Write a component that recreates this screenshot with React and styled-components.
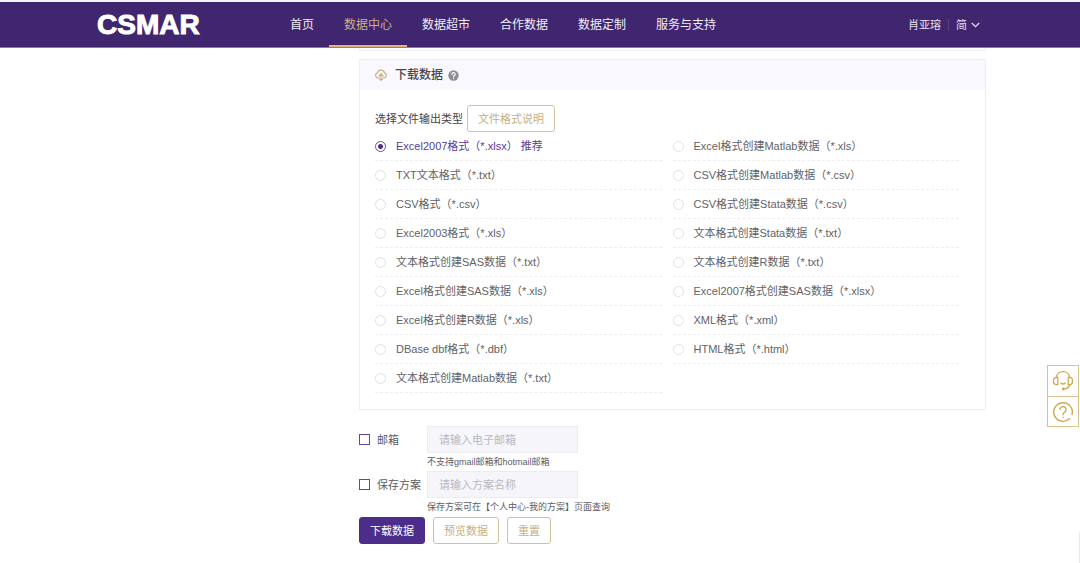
import React, { useState } from "react";
import styled, { createGlobalStyle } from "styled-components";

const GlobalStyle = createGlobalStyle`
  *, *::before, *::after { box-sizing: border-box; }
  body {
    margin: 0;
    background: #fff;
    color: #5c5c62;
    font: 11px/16px "Liberation Sans", "Noto Sans CJK SC", sans-serif;
  }
  button, input { font: inherit; margin: 0; }
`;

const Header = styled.header`
  display: flex;
  align-items: stretch;
  height: 48px;
  padding: 0 100px 0 97px;
  border-top: 2px solid #f4f3f8;
  border-bottom: 1px solid #8a78a8;
  background: #40256f;
  color: #fff;
`;

const Logo = styled.a`
  width: 178px;
  color: #fff;
  font-size: 28px;
  font-weight: 700;
  line-height: 46px;
  text-decoration: none;
  -webkit-text-stroke: 1px #fff;
`;

const Nav = styled.nav`
  display: flex;
`;

const NavLink = styled.a`
  padding: 0 15px;
  border-bottom: 2px solid ${(p) => (p.$active ? "#e6b277" : "transparent")};
  color: ${(p) => (p.$active ? "#c9b183" : "#f1eef6")};
  font-size: 12px;
  line-height: 46px;
  text-decoration: none;
  white-space: nowrap;
`;

const Account = styled.div`
  display: flex;
  align-items: center;
  margin-left: auto;
  color: #e6e0ef;
`;

const UserLink = styled.a`
  padding-right: 7px;
  border-right: 1px solid #5a4285;
  color: inherit;
  line-height: 12px;
  text-decoration: none;
`;

const LangButton = styled.button`
  display: flex;
  align-items: center;
  gap: 4px;
  padding: 0 0 0 7px;
  border: 0;
  background: none;
  color: inherit;
`;

const Main = styled.main`
  padding: 0 94px 0 359px;
`;

const PreviousPanel = styled.div`
  height: 3px;
  margin-bottom: 8px;
  border: 1px solid #efeff4;
  border-top: 0;
`;

const Panel = styled.section`
  border: 1px solid #ededf2;
`;

const PanelHeader = styled.div`
  display: flex;
  align-items: center;
  height: 30px;
  padding: 0 15px;
  background: #f8f8fe;
`;

const PanelTitle = styled.h2`
  margin: 0 5px 0 8px;
  color: #48484c;
  font-size: 12px;
  font-weight: 500;
`;

const PanelBody = styled.div`
  padding: 15px 26px 16px 15px;
`;

const TypeLine = styled.div`
  display: flex;
  align-items: center;
  gap: 4px;
  color: #444;
`;

const Button = styled.button`
  height: 27px;
  padding: 0 10px;
  border: 1px solid ${(p) => (p.$primary ? "#4d2d8a" : "#d2c39f")};
  border-radius: 3px;
  background: ${(p) => (p.$primary ? "#4d2d8a" : "#fff")};
  color: ${(p) => (p.$primary ? "#fff" : "#c4b083")};
  white-space: nowrap;
`;

const Formats = styled.div`
  display: grid;
  grid-template-columns: 1fr 1fr;
  align-items: start;
  gap: 11px;
`;

const FormatLabel = styled.label`
  display: flex;
  align-items: center;
  gap: 10px;
  height: 29px;
  border-bottom: 1px dashed #efeff1;
  color: ${(p) => (p.$checked ? "#5a3b97" : "#626267")};
  white-space: nowrap;
`;

const Radio = styled.input`
  appearance: none;
  width: 11px;
  height: 11px;
  border: 1px solid #e2e2e6;
  border-radius: 50%;
  background: #fff;
  &:checked {
    border-color: #6a4fa0;
    background: radial-gradient(circle, #4d2d8a 0 2px, #fff 3px);
  }
`;

const Options = styled.form`
  padding-top: 16px;
`;

const Field = styled.div`
  display: grid;
  grid-template-columns: 68px 151px;
  grid-template-rows: 27px 18px;
  align-items: center;
`;

const CheckLabel = styled.label`
  display: flex;
  align-items: center;
  gap: 7px;
  white-space: nowrap;
`;

const Checkbox = styled.input`
  appearance: none;
  width: 11px;
  height: 11px;
  border: 1px solid #6448a0;
  background: #fff;
  &:checked { background: #4d2d8a; }
`;

const TextInput = styled.input`
  width: 100%;
  height: 27px;
  padding: 0 11px;
  border: 1px solid #ebebf1;
  border-radius: 0;
  background: #f5f5fa;
  color: #444;
  &::placeholder { color: #b9b9c3; }
`;

const Hint = styled.span`
  grid-column: 2;
  font-size: 9px;
  white-space: nowrap;
`;

const Actions = styled.div`
  display: flex;
  gap: 8px;
  padding-top: 1px;
`;

const Floating = styled.aside`
  position: fixed;
  right: 1px;
  top: 365px;
  width: 32px;
  border: 1px solid #dcc38c;
  background: #fff;
`;

const FloatButton = styled.button`
  display: flex;
  align-items: center;
  justify-content: center;
  width: 30px;
  height: 30px;
  padding: 0;
  border: 0;
  background: none;
  color: #d0a94f;
  & + & {
    border-top: 1px solid #dcc38c;
  }
`;

const EdgeTab = styled.div`
  position: fixed;
  right: 0;
  bottom: 0;
  width: 1px;
  height: 31px;
  background: #e9e9e9;
`;

const left = [
  { name: "Excel2007格式（*.xlsx）", note: " 推荐" },
  { name: "TXT文本格式（*.txt）" },
  { name: "CSV格式（*.csv）" },
  { name: "Excel2003格式（*.xls）" },
  { name: "文本格式创建SAS数据（*.txt）" },
  { name: "Excel格式创建SAS数据（*.xls）" },
  { name: "Excel格式创建R数据（*.xls）" },
  { name: "DBase dbf格式（*.dbf）" },
  { name: "文本格式创建Matlab数据（*.txt）" },
];
const right = [
  { name: "Excel格式创建Matlab数据（*.xls）" },
  { name: "CSV格式创建Matlab数据（*.csv）" },
  { name: "CSV格式创建Stata数据（*.csv）" },
  { name: "文本格式创建Stata数据（*.txt）" },
  { name: "文本格式创建R数据（*.txt）" },
  { name: "Excel2007格式创建SAS数据（*.xlsx）" },
  { name: "XML格式（*.xml）" },
  { name: "HTML格式（*.html）" },
];
const links = ["首页", "数据中心", "数据超市", "合作数据", "数据定制", "服务与支持"];

const CloudIcon = () => (
  <svg width="12" height="12" viewBox="0 0 12 12" fill="none" stroke="#c9ae78" strokeWidth="1.1" strokeLinecap="round" strokeLinejoin="round">
    <path d="M4.200 9H3.100A2.600 2.600 0 0 1 2.500 3.900 3.600 3.600 0 0 1 9.500 3.900 2.600 2.600 0 0 1 8.900 9H7.800" />
    <path d="M6 4.300v7M3.900 7.200 6 5l2.100 2.200M4.600 10.200 6 11.400l1.400-1.200" />
  </svg>
);

const HelpDot = () => (
  <svg width="11" height="11" viewBox="0 0 11 11" fill="none" stroke="#fff" strokeLinecap="round">
    <circle cx="5.5" cy="5.5" r="5.2" fill="#8e8e92" stroke="none" />
    <path d="M3.9 4.3a1.6 1.6 0 1 1 2.5 1.2c-.6.4-.9.6-.9 1.2M5.5 8.4v.1" strokeWidth="1.2" />
  </svg>
);

const Chevron = () => (
  <svg width="9" height="6" viewBox="0 0 9 6" fill="none" stroke="currentColor" strokeWidth="1.2">
    <path d="M.8 1 4.5 4.6 8.2 1" />
  </svg>
);

const Headset = () => (
  <svg width="22" height="22" viewBox="0 0 22 22" fill="none" stroke="currentColor" strokeWidth="1.3" strokeLinecap="round" strokeLinejoin="round">
    <path d="M4.300 7.500C4.600 3.900 7.400 1.600 11 1.600s6.400 2.300 6.700 5.900" />
    <path d="M5.800 7.300v7.400H4.400C2.600 14.700 1.500 13.100 1.500 11s1.100-3.700 2.900-3.700zM16.200 7.300v7.400h1.400c1.800 0 2.900-1.600 2.900-3.700s-1.100-3.700-2.900-3.700z" />
    <path d="M8.800 13c1.200 1.300 3.200 1.300 4.400 0M17.600 15c-.6 2.200-2.500 3.600-5 3.900" />
    <circle cx="11.300" cy="19" r="1.400" fill="currentColor" stroke="none" />
  </svg>
);

const HelpRing = () => (
  <svg width="22" height="22" viewBox="0 0 22 22" fill="none" stroke="currentColor" strokeWidth="1.4" strokeLinecap="round">
    <path d="M17.600 17.600A9.300 9.300 0 1 1 20 13.500" />
    <path d="M8 8.600a3 3 0 1 1 4.700 2.500c-1.100.7-1.700 1.200-1.700 2.600M11 16.200v.2" />
  </svg>
);

function FormatColumn({ items, value, onChange }) {
  return (
    <div>
      {items.map(({ name, note }) => (
        <FormatLabel key={name} $checked={value === name}>
          <Radio type="radio" name="format" checked={value === name} onChange={() => onChange(name)} />
          <span>{name}{note}</span>
        </FormatLabel>
      ))}
    </div>
  );
}

export default function App() {
  const [format, setFormat] = useState(left[0].name);
  return (
    <>
      <GlobalStyle />
      <Header>
        <Logo href="#">CSMAR</Logo>
        <Nav>
          {links.map((l, i) => (
            <NavLink key={l} href="#" $active={i === 1}>{l}</NavLink>
          ))}
        </Nav>
        <Account>
          <UserLink href="#">肖亚瑢</UserLink>
          <LangButton type="button">简<Chevron /></LangButton>
        </Account>
      </Header>
      <Main>
        <PreviousPanel />
        <Panel>
          <PanelHeader>
            <CloudIcon />
            <PanelTitle>下载数据</PanelTitle>
            <HelpDot />
          </PanelHeader>
          <PanelBody>
            <TypeLine>
              选择文件输出类型
              <Button type="button">文件格式说明</Button>
            </TypeLine>
            <Formats>
              <FormatColumn items={left} value={format} onChange={setFormat} />
              <FormatColumn items={right} value={format} onChange={setFormat} />
            </Formats>
          </PanelBody>
        </Panel>
        <Options onSubmit={(e) => e.preventDefault()}>
          <Field>
            <CheckLabel><Checkbox type="checkbox" />邮箱</CheckLabel>
            <TextInput type="email" aria-label="邮箱" placeholder="请输入电子邮箱" />
            <Hint>不支持gmail邮箱和hotmail邮箱</Hint>
          </Field>
          <Field>
            <CheckLabel><Checkbox type="checkbox" />保存方案</CheckLabel>
            <TextInput type="text" aria-label="保存方案" placeholder="请输入方案名称" />
            <Hint>保存方案可在【个人中心-我的方案】页面查询</Hint>
          </Field>
          <Actions>
            <Button type="submit" $primary>下载数据</Button>
            <Button type="button">预览数据</Button>
            <Button type="reset">重置</Button>
          </Actions>
        </Options>
      </Main>
      <Floating>
        <FloatButton type="button" aria-label="在线客服"><Headset /></FloatButton>
        <FloatButton type="button" aria-label="帮助"><HelpRing /></FloatButton>
      </Floating>
      <EdgeTab />
    </>
  );
}
